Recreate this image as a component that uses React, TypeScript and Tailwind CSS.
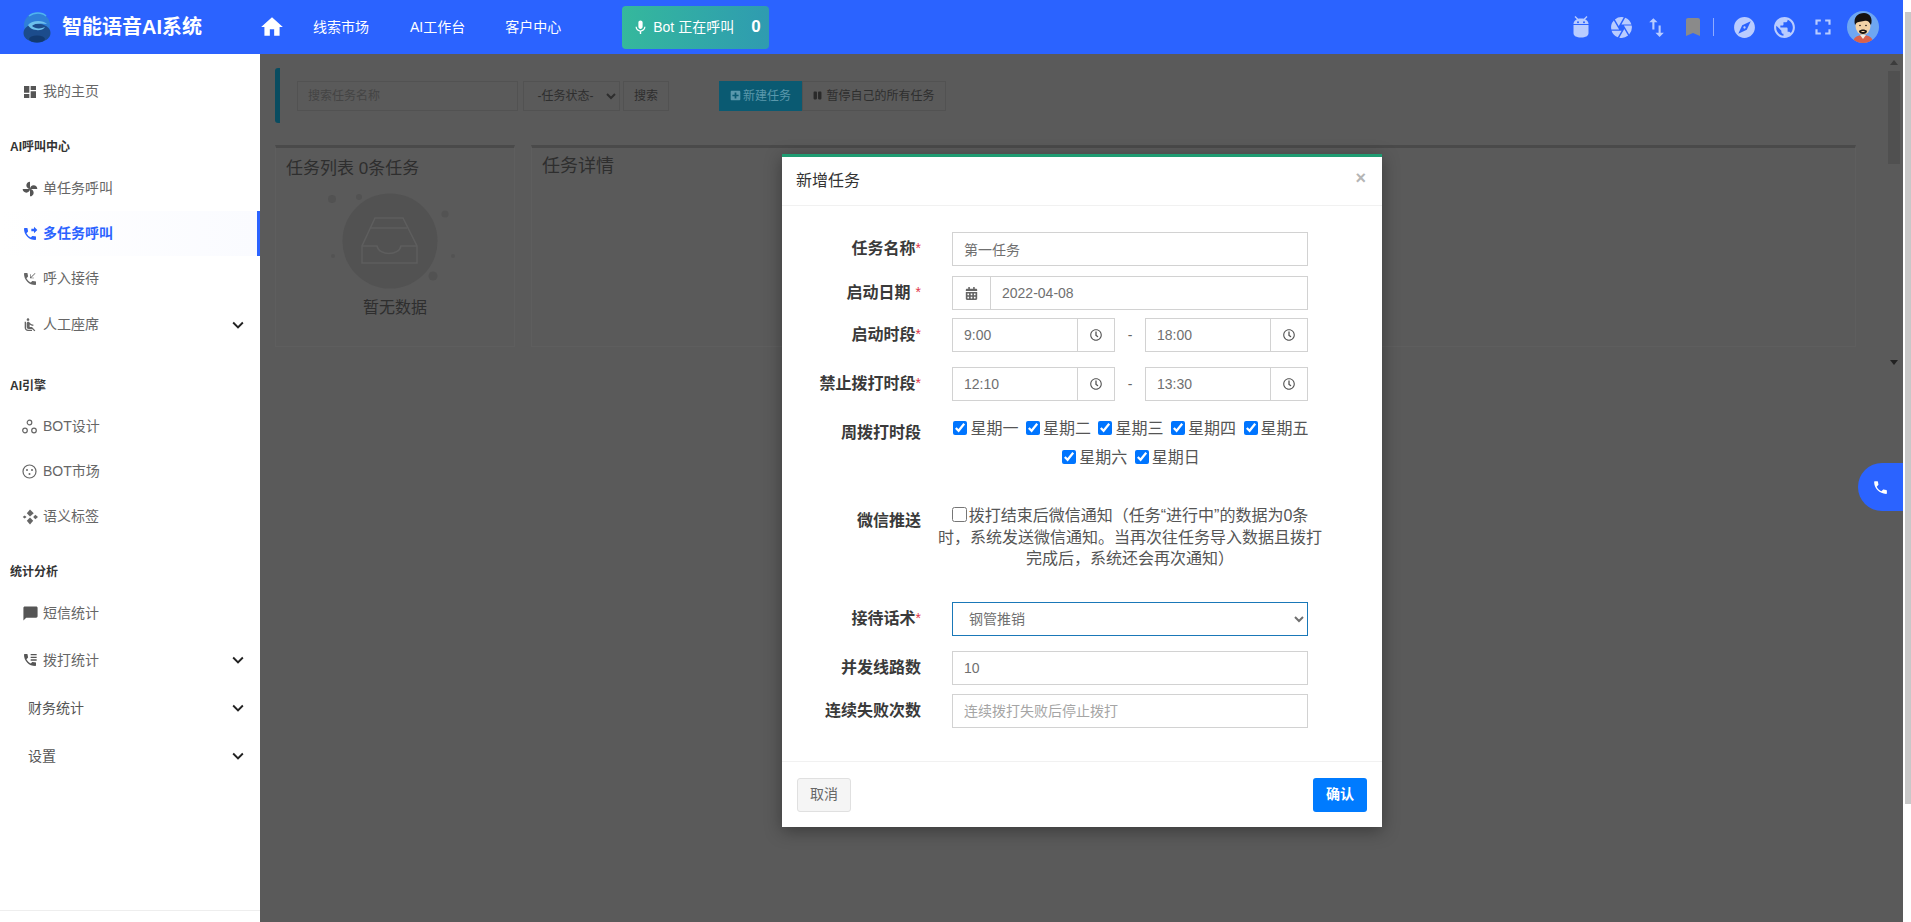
import React from 'react'
import {
  MdAirlineSeatReclineNormal,
  MdBookmark,
  MdCamera,
  MdChatBubble,
  MdDashboard,
  MdExplore,
  MdFullscreen,
  MdHome,
  MdImportExport,
  MdKeyboardArrowDown,
  MdMic,
  MdPhone,
  MdPhoneCallback,
  MdPhoneForwarded,
  MdPublic,
} from 'react-icons/md'
import { FaCalendarAlt, FaPause, FaPlusSquare, FaRegClock } from 'react-icons/fa'

const Logo = () => (
  <svg width="30" height="32" viewBox="0 0 30 32" className="ml-[22px] shrink-0">
    <ellipse cx="15" cy="14" rx="13" ry="12.5" fill="#2f7fd8" />
    <ellipse cx="15" cy="22" rx="13.5" ry="9.5" fill="#1c4c8c" />
    <path d="M6 14 C 10 9, 21 9, 25 13 C 20 12, 12 12, 10 15 C 13 18, 19 18, 23 16 C 20 21, 9 20, 6 14 Z" fill="#6cc0ec" />
    <path d="M7 5 C 12 1, 20 1, 24 5" stroke="#4fb4f0" strokeWidth="1.5" fill="none" />
    <ellipse cx="15" cy="28" rx="8" ry="3.5" fill="#123a70" />
  </svg>
)

const Android = () => (
  <svg width="16" height="22" viewBox="0 0 16 22" fill="#b9ccff">
    <path d="M2 0.5 L5 3.5 M14 0.5 L11 3.5" stroke="#b9ccff" strokeWidth="1.4" />
    <path d="M0.5 8 C0.5 4.5 4 2.5 8 2.5 C12 2.5 15.5 4.5 15.5 8 Z" />
    <path d="M0.5 9 H15.5 V17 C15.5 20 12.5 21.5 8 21.5 C3.5 21.5 0.5 20 0.5 17 Z" />
    <circle cx="5" cy="6.3" r="1" fill="#2b63ff" />
    <circle cx="11" cy="6.3" r="1" fill="#2b63ff" />
  </svg>
)

const Avatar = () => (
  <svg width="32" height="32" viewBox="0 0 32 32" className="ml-[11px] shrink-0">
    <clipPath id="av">
      <circle cx="16" cy="16" r="16" />
    </clipPath>
    <g clipPath="url(#av)">
      <rect width="32" height="32" fill="#6ea6f2" />
      <path d="M6 32 C6 26 11 24 16 24 C21 24 26 26 26 32 Z" fill="#d9614c" />
      <path d="M13 24 L16 28 L19 24 Z" fill="#f4efe6" />
      <ellipse cx="16" cy="15" rx="7.5" ry="9" fill="#f2d2a6" />
      <path d="M8 14 C6 6 11 2 17 2 C23 2 26 7 24 14 C22 10 20 9 17 10 C13 11 10 10 8 14 Z" fill="#15110f" />
      <path d="M12 20 C14 18 18 18 20 20 C20 24 12 24 12 20 Z" fill="#1b1512" />
      <rect x="14.5" y="20" width="3" height="1" fill="#f2d2a6" />
      <circle cx="13" cy="14.5" r="0.8" fill="#1b1512" />
      <circle cx="19" cy="14.5" r="0.8" fill="#1b1512" />
    </g>
  </svg>
)

const FanIcon = () => (
  <svg width="16" height="16" viewBox="0 0 24 24" fill="#555">
    <path d="M12 12c0-3 2.5-5.5 5.5-5.5S23 9 23 12H12zm0 0c0 3-2.5 5.5-5.5 5.5S1 15 1 12h11zm0 0c-3 0-5.5-2.5-5.5-5.5S9 1 12 1v11zm0 0c3 0 5.5 2.5 5.5 5.5S15 23 12 23V12z" />
  </svg>
)

const NodesIcon = () => (
  <svg width="15" height="15" viewBox="0 0 15 15" fill="none" stroke="#666" strokeWidth="1.2">
    <circle cx="7.5" cy="3.5" r="2.3" />
    <circle cx="3" cy="11.5" r="2.3" />
    <circle cx="12" cy="11.5" r="2.3" />
  </svg>
)

const FaceIcon = () => (
  <svg width="15" height="15" viewBox="0 0 15 15" fill="#666">
    <circle cx="7.5" cy="7.5" r="6.5" fill="none" stroke="#666" strokeWidth="1.2" />
    <circle cx="5" cy="6" r="1" />
    <circle cx="10" cy="6" r="1" />
    <circle cx="7.5" cy="10" r="1" />
  </svg>
)

const DiamondsIcon = () => (
  <svg width="16" height="16" viewBox="0 0 15 15" fill="#666">
    <path d="M7.5 0.5 L11 4 L7.5 7 L4.5 4 Z" />
    <path d="M7.5 8 L10.5 11 L7.5 14.5 L4.5 11 Z" />
    <path d="M12.5 5.5 L15 7.5 L12.5 9.5 L10.5 7.5 Z" />
    <path d="M2.5 6 L4.3 7.5 L2.5 9 L0.7 7.5 Z" />
  </svg>
)

const DialIcon = () => (
  <svg width="16" height="16" viewBox="0 0 24 24" fill="#555">
    <path d="M6.62 10.79c1.44 2.83 3.76 5.14 6.59 6.59l2.2-2.2c.27-.27.67-.36 1.02-.24 1.12.37 2.33.57 3.57.57.55 0 1 .45 1 1V20c0 .55-.45 1-1 1-9.39 0-17-7.61-17-17 0-.55.45-1 1-1h3.5c.55 0 1 .45 1 1 0 1.25.2 2.45.57 3.57.11.35.03.74-.25 1.02l-2.2 2.2z" />
    <path d="M13 3h9v2h-9zM13 7h9v2h-9zM13 11h9v2h-9z" />
  </svg>
)

const EmptyBox = () => (
  <svg width="150" height="110" viewBox="0 0 150 110" className="-ml-[10px]">
    <circle cx="75" cy="55" r="47.5" fill="#525252" />
    <circle cx="17" cy="13" r="4" fill="#525252" />
    <circle cx="44" cy="11" r="3" fill="#525252" />
    <circle cx="130" cy="28" r="3.5" fill="#535353" />
    <circle cx="118" cy="90" r="4.5" fill="#525252" />
    <circle cx="138" cy="70" r="2" fill="#535353" />
    <circle cx="18" cy="70" r="2" fill="#535353" />
    <g fill="none" stroke="#5e5e5e" strokeWidth="1.5">
      <path d="M60 32 H88 L102 60 V77 H47 V60 Z" />
      <path d="M56 42 H92" />
      <path d="M47 60 H62 C64 70 84 70 86 60 H102" />
    </g>
  </svg>
)

const Chevron = () => <MdKeyboardArrowDown size={22} color="#222" className="mr-[11px] ml-auto" />

const NavItem = ({ icon, label, active, arrow, className }: any) => (
  <div
    className={`flex items-center pl-[22px] text-[14px] ${active ? 'border-r-[3px] border-[#2b63ff] bg-gradient-to-r from-white to-[#fafbff] font-bold text-[#2b63ff]' : 'text-[#666]'} ${className}`}
  >
    <span className="flex w-[21px] shrink-0 items-center">{icon}</span>
    {label}
    {arrow && <Chevron />}
  </div>
)

const Heading = ({ children, className }: any) => (
  <div className={`flex h-[20px] items-center pl-[10px] text-[12px] font-bold text-[#333] ${className}`}>{children}</div>
)

const Sidebar = () => (
  <aside className="flex w-[260px] shrink-0 flex-col bg-white pt-[15px]">
    <NavItem icon={<MdDashboard size={16} color="#555" />} label="我的主页" className="h-[45px]" />
    <Heading className="mt-[23px] mb-[9px]">AI呼叫中心</Heading>
    <NavItem icon={<FanIcon />} label="单任务呼叫" className="h-[45px]" />
    <NavItem icon={<MdPhoneForwarded size={16} />} label="多任务呼叫" active className="h-[45px]" />
    <NavItem icon={<MdPhoneCallback size={16} />} label="呼入接待" className="h-[45px]" />
    <NavItem icon={<MdAirlineSeatReclineNormal size={16} />} label="人工座席" arrow className="h-[47px]" />
    <Heading className="mt-[28px] mb-[8px]">AI引擎</Heading>
    <NavItem icon={<NodesIcon />} label="BOT设计" className="h-[45px]" />
    <NavItem icon={<FaceIcon />} label="BOT市场" className="h-[45px]" />
    <NavItem icon={<DiamondsIcon />} label="语义标签" className="h-[45px]" />
    <Heading className="mt-[23px] mb-[9px]">统计分析</Heading>
    <NavItem icon={<MdChatBubble size={17} color="#555" />} label="短信统计" className="h-[45px]" />
    <NavItem icon={<DialIcon />} label="拨打统计" arrow className="h-[48px]" />
    <div className="flex h-[48px] items-center pl-[28px] text-[14px] text-[#555]">
      财务统计
      <Chevron />
    </div>
    <div className="flex h-[48px] items-center pl-[28px] text-[14px] text-[#555]">
      设置
      <Chevron />
    </div>
    <div className="mt-auto h-[12px] border-t border-[#eee]" />
  </aside>
)

const Header = () => (
  <header className="flex h-[54px] shrink-0 items-center bg-[#2b63ff] pr-[24px] text-white">
    <Logo />
    <span className="ml-[10px] text-[20px] font-bold whitespace-nowrap">智能语音AI系统</span>
    <MdHome size={26} className="ml-[57px]" />
    <span className="ml-[28px] text-[14px]">线索市场</span>
    <span className="ml-[41px] text-[14px]">AI工作台</span>
    <span className="ml-[40px] text-[14px]">客户中心</span>
    <div className="ml-[61px] flex h-[43px] w-[147px] items-center rounded-[4px] bg-gradient-to-r from-[#35b89c] to-[#2f9bb0] pl-[10px]">
      <MdMic size={17} />
      <span className="ml-[4px] text-[14px] whitespace-nowrap">Bot 正在呼叫</span>
      <span className="ml-[17px] text-[17px] font-bold">0</span>
    </div>
    <div className="ml-auto flex items-center text-[#b9ccff]">
      <span className="flex w-[24px] justify-center">
        <Android />
      </span>
      <MdCamera size={25} className="ml-[16px]" />
      <MdImportExport size={25} className="ml-[10px]" />
      <MdBookmark size={24} color="#8a8a8a" className="ml-[12px]" />
      <span className="ml-[8px] h-[18px] w-px bg-[#8fabff]" />
      <MdExplore size={25} className="ml-[18px]" />
      <MdPublic size={25} className="ml-[15px]" />
      <MdFullscreen size={26} className="ml-[13px]" />
      <Avatar />
    </div>
  </header>
)

const Toolbar = () => (
  <div className="flex h-[55px] items-center rounded-[3px] border-l-[5px] border-[#094c60] pl-[17px] text-[12px] text-[#2e2e2e]">
    <input
      placeholder="搜索任务名称"
      className="h-[30px] w-[221px] border border-[#525252] bg-transparent px-[10px] placeholder:text-[#444]"
    />
    <select className="ml-[5px] h-[30px] w-[97px] border border-[#525252] bg-transparent text-center">
      <option>-任务状态-</option>
    </select>
    <button className="ml-[3px] h-[30px] w-[46px] border border-[#525252]">搜索</button>
    <div className="ml-[50px] flex h-[30px]">
      <button className="flex w-[83px] items-center justify-center gap-[2px] bg-[#0a5a72] text-[#5a98ac]">
        <FaPlusSquare size={11} color="#5a98ac" />
        新建任务
      </button>
      <button className="flex w-[144px] items-center justify-center gap-[4px] border border-[#525252]">
        <FaPause size={9} color="#2a2a2a" />
        暂停自己的所有任务
      </button>
    </div>
  </div>
)

const Main = () => (
  <main className="flex flex-1 bg-[#5a5a5a]">
    <div className="flex-1 pt-[14px] pr-[32px] pl-[15px]">
      <Toolbar />
      <div className="mt-[22px] flex h-[202px] gap-[16px] text-[#2e2e2e]">
        <section className="w-[240px] border border-t-[3px] border-[#5e5e5e] border-t-[#4a4a4a]">
          <h3 className="mt-[9px] pl-[10px] text-[17px] leading-[24px] whitespace-nowrap">任务列表 0条任务</h3>
          <div className="mt-[5px] flex flex-col items-center">
            <EmptyBox />
            <span className="text-[16px] leading-[24px]">暂无数据</span>
          </div>
        </section>
        <section className="flex-1 border border-t-[3px] border-[#5e5e5e] border-t-[#4a4a4a]">
          <h3 className="mt-[5px] pl-[10px] text-[18px] leading-[26px]">任务详情</h3>
        </section>
      </div>
    </div>
    <div className="flex h-[317px] w-[15px] flex-col pr-[3px]">
      <div className="flex h-[17px] items-center justify-center">
        <span className="h-0 w-0 border-x-[4px] border-b-[5px] border-x-transparent border-b-[#3c3c3c]" />
      </div>
      <div className="h-[93px] bg-[#505050]" />
      <div className="mt-auto flex h-[17px] items-center justify-center">
        <span className="h-0 w-0 border-x-[4px] border-t-[5px] border-x-transparent border-t-[#222]" />
      </div>
    </div>
  </main>
)

const fieldCls = 'h-[34px] bg-white text-[14px] text-[#707070] outline-none placeholder:text-[#a5a5a5]'
const inputCls = `${fieldCls} border border-[#d2d2d2] px-[11px]`

const Label = ({ text, star, className }: any) => (
  <div className={`flex w-[139px] shrink-0 items-center justify-end text-[16px] font-bold whitespace-nowrap text-[#3a3a3a] ${className}`}>
    {text}
    {star && <span className={`self-start pt-[6px] text-[14px] font-normal text-[#e0344b] ${star === 'gap' ? 'pl-[5px]' : ''}`}>*</span>}
  </div>
)

const Row = ({ children, className }: any) => <div className={`flex gap-[31px] ${className}`}>{children}</div>

const TimeInput = ({ value }: { value: string }) => (
  <div className="flex w-[163px]">
    <input readOnly value={value} className={`${inputCls} w-[125px] min-w-0 border-r-0`} />
    <span className="flex h-[34px] w-[38px] items-center justify-center border border-[#d2d2d2] text-[#555]">
      <FaRegClock size={12} />
    </span>
  </div>
)

const TimeRange = ({ from, to }: { from: string; to: string }) => (
  <div className="flex w-[356px] items-center justify-between">
    <TimeInput value={from} />
    <span className="text-[14px] text-[#666]">-</span>
    <TimeInput value={to} />
  </div>
)

const days = ['星期一', '星期二', '星期三', '星期四', '星期五', '星期六', '星期日']

const Modal = () => (
  <div className="absolute top-[154px] left-[782px] flex h-[673px] w-[600px] flex-col border-t-[3px] border-[#1f9c72] bg-white shadow-[0_4px_16px_rgba(0,0,0,0.35)]">
    <div className="flex h-[49px] shrink-0 items-center border-b border-[#f1f1f1] pr-[16px] pl-[14px]">
      <h2 className="text-[16px] text-[#333]">新增任务</h2>
      <span className="ml-auto mb-[6px] text-[18px] font-bold text-[#b5b5b5]">×</span>
    </div>
    <form className="flex flex-1 flex-col pt-[26px]">
      <Row>
        <Label text="任务名称" star="tight" />
        <input readOnly value="第一任务" className={`${inputCls} w-[356px]`} />
      </Row>
      <Row className="mt-[10px]">
        <Label text="启动日期" star="gap" />
        <div className="flex w-[356px]">
          <span className="flex h-[34px] w-[38px] shrink-0 items-center justify-center border border-r-0 border-[#d2d2d2] text-[#666]">
            <FaCalendarAlt size={13} />
          </span>
          <input readOnly value="2022-04-08" className={`${inputCls} min-w-0 flex-1`} />
        </div>
      </Row>
      <Row className="mt-[8px]">
        <Label text="启动时段" star="tight" />
        <TimeRange from="9:00" to="18:00" />
      </Row>
      <Row className="mt-[15px]">
        <Label text="禁止拨打时段" star="tight" />
        <TimeRange from="12:10" to="13:30" />
      </Row>
      <Row className="mt-[13px]">
        <Label text="周拨打时段" className="h-[38px]" />
        <div className="flex w-[357px] flex-wrap justify-center gap-x-[7.5px] pl-[1px]">
          {days.map(d => (
            <label key={d} className="flex h-[29px] items-center gap-[3px] text-[16px] text-[#555]">
              <input type="checkbox" defaultChecked className="mb-[2px] h-[14px] w-[14px]" />
              {d}
            </label>
          ))}
        </div>
      </Row>
      <Row className="mt-[33px]">
        <Label text="微信推送" className="h-[32px]" />
        <div className="-ml-[22px] w-[400px] text-center text-[16px] leading-[21.5px] whitespace-nowrap text-[#555]">
          <input type="checkbox" className="mr-[2px] h-[15px] w-[15px] align-[-1px]" />
          拨打结束后微信通知（任务“进行中”的数据为0条
          <br />
          时，系统发送微信通知。当再次往任务导入数据且拨打
          <br />
          完成后，系统还会再次通知）
        </div>
      </Row>
      <Row className="mt-[32px]">
        <Label text="接待话术" star="tight" />
        <select className={`${fieldCls} w-[356px] border border-[#1a78b8] px-[12px]`}>
          <option>钢管推销</option>
        </select>
      </Row>
      <Row className="mt-[15px]">
        <Label text="并发线路数" />
        <input readOnly value="10" className={`${inputCls} w-[356px]`} />
      </Row>
      <Row className="mt-[9px]">
        <Label text="连续失败次数" />
        <input placeholder="连续拨打失败后停止拨打" className={`${inputCls} w-[356px]`} />
      </Row>
      <div className="mt-auto flex h-[66px] items-center justify-between border-t border-[#f1f1f1] px-[15px]">
        <button type="button" className="h-[34px] w-[54px] rounded-[3px] border border-[#e0e0e0] bg-[#f5f5f5] text-[14px] text-[#666]">
          取消
        </button>
        <button type="button" className="h-[34px] w-[54px] rounded-[3px] bg-[#007bff] text-[14px] font-bold text-white">
          确认
        </button>
      </div>
    </form>
  </div>
)

export default function App() {
  return (
    <div className="relative flex h-screen w-full overflow-hidden bg-white font-['Liberation_Sans','Noto_Sans_CJK_SC',sans-serif]">
      <div className="flex min-w-0 flex-1 flex-col">
        <Header />
        <div className="flex min-h-0 flex-1">
          <Sidebar />
          <Main />
        </div>
      </div>
      {/* browser scrollbar */}
      <div className="flex w-[8px] shrink-0 flex-col bg-white pl-[2px]">
        <div className="mt-[12px] h-[792px] bg-[#c8c8c8]" />
      </div>
      <Modal />
      <div className="absolute top-[463px] right-[8px] flex h-[48px] w-[45px] items-center justify-center rounded-l-full bg-[#2b63ff] text-white">
        <MdPhone size={17} />
      </div>
    </div>
  )
}
